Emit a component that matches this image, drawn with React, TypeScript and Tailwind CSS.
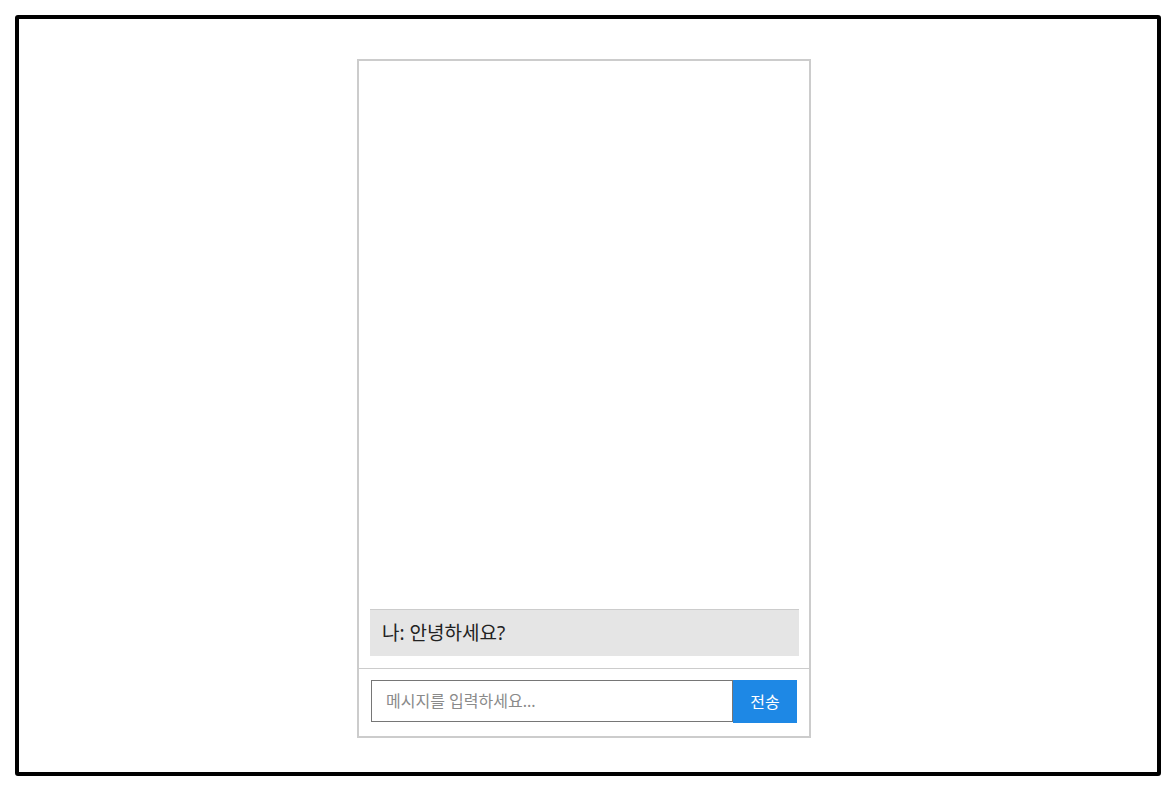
import React, { useState } from "react";

type Message = { id: number; author: string; text: string };

const initialMessages: Message[] = [{ id: 1, author: "나", text: "안녕하세요?" }];

const ChatBox = () => {
  const [messages] = useState<Message[]>(initialMessages);
  const [draft, setDraft] = useState("");

  return (
    <div className="mr-[8px] flex h-[679px] w-[454px] flex-col border-2 border-[#cccccc] bg-white">
      {/* message list, newest at the bottom */}
      <div className="flex flex-1 flex-col justify-end gap-2 overflow-y-auto pb-3 pl-[11px] pr-[10px] pt-3">
        {messages.map((m) => (
          <div
            key={m.id}
            className="h-[47px] border-t border-[#cccccc] bg-[#e5e5e5] px-3 pt-[10px] text-[19px] leading-[26px] text-[#222222]"
          >
            {m.author}: {m.text}
          </div>
        ))}
      </div>
      <div className="flex border-t border-[#cccccc] px-3 pb-[13px] pt-[11px]">
        <input
          value={draft}
          onChange={(e) => setDraft(e.target.value)}
          placeholder="메시지를 입력하세요..."
          className="h-[42px] flex-1 border border-[#767676] px-[14px] text-[16px] text-[#222222] outline-none placeholder:text-[#8a8a8a]"
        />
        <button className="h-[43px] w-[64px] bg-[#1e88e5] text-[16px] text-white">
          전송
        </button>
      </div>
    </div>
  );
};

const App = () => {
  return (
    <div
      className="h-[792px] w-[1175px] bg-white p-[15px]"
      style={{ fontFamily: '"Noto Sans", "Noto Sans CJK KR", sans-serif' }}
    >
      <div className="flex h-[761px] w-[1146px] justify-center rounded-[3px] border-[4px] border-black pt-10">
        <ChatBox />
      </div>
    </div>
  );
};

export default App;
